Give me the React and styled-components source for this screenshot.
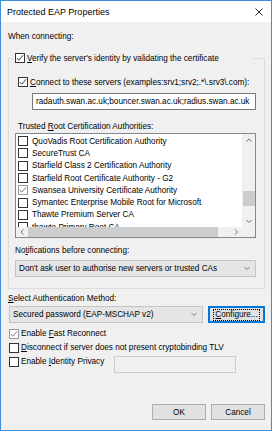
import React from 'react';
import styled, { createGlobalStyle } from 'styled-components';

const Global = createGlobalStyle`
  html, body { margin: 0; padding: 0; background: #ffffff; }
  body {
    font-family: "Liberation Sans", Arial, sans-serif;
    font-size: 8.2px;
    color: #000;
  }
  * { box-sizing: border-box; }
`;

const Window = styled.div`
  width: 272px;
  height: 431px;
  border: 1px solid #3c8ddc;
  display: flex;
  flex-direction: column;
  background: #f0f0f0;
  overflow: hidden;
`;

const TitleBar = styled.div`
  height: 21px;
  flex: none;
  background: #ffffff;
  display: flex;
  align-items: center;
  justify-content: space-between;
  padding: 0 8px 0 6px;
  font-size: 9px;
`;

const Body = styled.div`
  flex: 1;
  display: flex;
  flex-direction: column;
`;

const Text = styled.div`
  line-height: 12px;
  height: 12px;
  white-space: nowrap;
  margin: ${p => p.$m || '0'};
`;

const Group = styled.fieldset`
  margin: 9px 6px 0 7px;
  border: 1px solid #dcdcdc;
  padding: 0 0 11px 0;
  min-width: 0;
`;

const Legend = styled.legend`
  margin-left: 4px;
  padding: 0 0 0 2px;
  width: 240px;
  height: 12px;
  display: flex;
  align-items: center;
  gap: 2px;
  background: #f0f0f0;
  white-space: nowrap;
`;

const Row = styled.div`
  display: flex;
  align-items: center;
  gap: 2px;
  height: 12px;
  white-space: nowrap;
  margin: ${p => p.$m || '0'};
`;

const Box = styled.span`
  flex: none;
  width: 10px;
  height: 10px;
  border: 1px solid ${p => (p.$dim ? '#9a9a9a' : '#333333')};
  background: #ffffff;
  display: inline-flex;
  align-items: center;
  justify-content: center;
`;

const Check = ({ checked, dim }) => (
  <Box $dim={dim}>
    {checked && (
      <svg width="8" height="8" viewBox="0 0 8 8">
        <polyline
          points="0.8,4 2.8,6.2 7.2,1.2"
          fill="none"
          stroke={dim ? '#6f6f6f' : '#222'}
          strokeWidth="0.9"
        />
      </svg>
    )}
  </Box>
);

const Input = styled.div`
  margin: 5px 0 0 23px;
  width: 224px;
  height: 17px;
  border: 1px solid #7a7a7a;
  background: #ffffff;
  padding-left: 3px;
  line-height: 15px;
  white-space: nowrap;
  overflow: hidden;
`;

const ListBox = styled.div`
  margin-left: 6px;
  width: 241px;
  height: 105px;
  border: 1px solid #828790;
  background: #ffffff;
  display: grid;
  grid-template-columns: 1fr 13px;
  grid-template-rows: 1fr 10px;
`;

const ListItems = styled.div`
  overflow: hidden;
  padding-top: 1px;
`;

const ListRow = styled.div`
  height: 12.3px;
  display: flex;
  align-items: center;
  gap: 4px;
  padding-left: 2px;
  white-space: nowrap;
`;

const VScroll = styled.div`
  background: #f0f0f0;
  display: flex;
  flex-direction: column;
  align-items: center;
`;

const HScroll = styled.div`
  background: #f0f0f0;
  display: flex;
  align-items: center;
`;

const ArrowCell = styled.div`
  flex: none;
  width: ${p => p.$w || 12}px;
  height: ${p => p.$h || 12}px;
  display: flex;
  align-items: center;
  justify-content: center;
`;

const VThumb = styled.div`
  margin-top: ${p => p.$top}px;
  width: 12px;
  height: 15px;
  background: #cdcdcd;
`;

const HThumb = styled.div`
  width: 190px;
  height: 10px;
  background: #cdcdcd;
`;

const Spacer = styled.div`
  flex: 1;
`;

const Corner = styled.div`
  background: #f0f0f0;
`;

const Combo = styled.div`
  margin: ${p => p.$m || '0'};
  width: ${p => p.$w}px;
  height: 17px;
  flex: none;
  border: 1px solid #c4c4c4;
  background: #e5e5e5;
  display: flex;
  align-items: center;
  justify-content: space-between;
  padding: 0 5px 0 3px;
  white-space: nowrap;
`;

const MethodRow = styled.div`
  display: flex;
  gap: 5px;
  height: 17px;
  margin: 1px 6px 0 8px;
`;

const Button = styled.div`
  flex: none;
  width: ${p => p.$w}px;
  height: ${p => p.$h}px;
  background: #e1e1e1;
  border: 1px solid ${p => (p.$focus ? '#0078d7' : '#adadad')};
  box-shadow: ${p => (p.$focus ? 'inset 0 0 0 1px #0078d7' : 'none')};
  display: flex;
  align-items: center;
  justify-content: center;
  white-space: nowrap;
`;

const FocusText = styled.span`
  outline: 1px dotted #000;
  outline-offset: 0;
  line-height: 10px;
  padding: 0 1px;
`;

const Options = styled.div`
  margin: 4px 0 0 8px;
  display: flex;
  flex-direction: column;
  gap: 1px;
`;

const CheckRow = styled.div`
  display: flex;
  align-items: flex-start;
  gap: 2px;
  height: 13px;
  white-space: nowrap;
  & > span:first-child { margin-top: 2px; }
`;

const CheckLabel = styled.span`
  line-height: 13px;
  width: ${p => (p.$w ? `${p.$w}px` : 'auto')};
  flex: none;
`;

const TextBox = styled.div`
  margin-top: 1px;
  width: 122px;
  height: 17px;
  border: 1px solid #cccccc;
  background: #f0f0f0;
`;

const Buttons = styled.div`
  margin: auto 6px 10px 0;
  display: flex;
  justify-content: flex-end;
  gap: 5px;
`;

const Chevron = ({ dir = 'down', color = '#606060' }) => {
  const pts = {
    up: '0.5,3.5 3,1 5.5,3.5',
    down: '0.5,1 3,3.5 5.5,1',
    left: '3.5,0.5 1,3 3.5,5.5',
    right: '1,0.5 3.5,3 1,5.5',
  }[dir];
  const vertical = dir === 'up' || dir === 'down';
  return (
    <svg width={vertical ? 6 : 5} height={vertical ? 5 : 6} viewBox={vertical ? '0 0 6 5' : '0 0 5 6'}>
      <polyline points={pts} fill="none" stroke={color} strokeWidth="0.9" />
    </svg>
  );
};

const Close = () => (
  <svg width="8" height="8" viewBox="0 0 8 8">
    <path d="M0.5 0.5 L7.5 7.5 M7.5 0.5 L0.5 7.5" stroke="#111" strokeWidth="0.9" />
  </svg>
);

const cas = [
  { name: 'QuoVadis Root Certification Authority' },
  { name: 'SecureTrust CA' },
  { name: 'Starfield Class 2 Certification Authority' },
  { name: 'Starfield Root Certificate Authority - G2' },
  { name: 'Swansea University Certificate Authority', checked: true },
  { name: 'Symantec Enterprise Mobile Root for Microsoft' },
  { name: 'Thawte Premium Server CA' },
  { name: 'thawte Primary Root CA' },
];

export default function App() {
  return (
    <>
      <Global />
      <Window>
        <TitleBar>
          <span>Protected EAP Properties</span>
          <Close />
        </TitleBar>
        <Body>
          <Text $m="9px 0 0 7px">When connecting:</Text>
          <Group>
            <Legend>
              <Check checked />
              <span><u>V</u>erify the server's identity by validating the certificate</span>
            </Legend>
            <Row $m="12px 0 0 9px">
              <Check checked />
              <span><u>C</u>onnect to these servers (examples:srv1;srv2;.*\.srv3\.com):</span>
            </Row>
            <Input>radauth.swan.ac.uk;bouncer.swan.ac.uk;radius.swan.ac.uk</Input>
            <Text $m="11px 0 0 9px">Trusted <u>R</u>oot Certification Authorities:</Text>
            <ListBox>
              <ListItems>
                {cas.map(c => (
                  <ListRow key={c.name}>
                    <Check checked={c.checked} dim={c.checked} />
                    <span>{c.name}</span>
                  </ListRow>
                ))}
              </ListItems>
              <VScroll>
                <ArrowCell $w={13} $h={12}><Chevron dir="up" /></ArrowCell>
                <VThumb $top={45} />
                <Spacer />
                <ArrowCell $w={13} $h={12}><Chevron dir="down" /></ArrowCell>
              </VScroll>
              <HScroll>
                <ArrowCell $w={12} $h={10}><Chevron dir="left" /></ArrowCell>
                <HThumb />
                <Spacer />
                <ArrowCell $w={12} $h={10}><Chevron dir="right" /></ArrowCell>
              </HScroll>
              <Corner />
            </ListBox>
            <Text $m="7px 0 0 6px">No<u>t</u>ifications before connecting:</Text>
            <Combo $w={241} $m="3px 0 0 6px">
              <span>Don't ask user to authorise new servers or trusted CAs</span>
              <Chevron dir="down" color="#707070" />
            </Combo>
          </Group>
          <Text $m="4px 0 0 7px"><u>S</u>elect Authentication Method:</Text>
          <MethodRow>
            <Combo $w={194}>
              <span>Secured password (EAP-MSCHAP v2)</span>
              <Chevron dir="down" color="#707070" />
            </Combo>
            <Button $w={57} $h={17} $focus>
              <FocusText><u>C</u>onfigure...</FocusText>
            </Button>
          </MethodRow>
          <Options>
            <CheckRow>
              <Check checked dim />
              <CheckLabel>Enable <u>F</u>ast Reconnect</CheckLabel>
            </CheckRow>
            <CheckRow>
              <Check />
              <CheckLabel><u>D</u>isconnect if server does not present cryptobinding TLV</CheckLabel>
            </CheckRow>
            <CheckRow>
              <Check />
              <CheckLabel $w={91}>Enable <u>I</u>dentity Privacy</CheckLabel>
              <TextBox />
            </CheckRow>
          </Options>
          <Buttons>
            <Button $w={54} $h={16}>OK</Button>
            <Button $w={54} $h={16}>Cancel</Button>
          </Buttons>
        </Body>
      </Window>
    </>
  );
}
